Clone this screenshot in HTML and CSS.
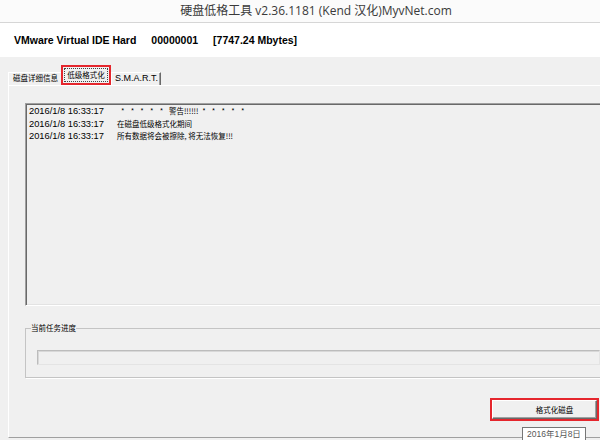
FILE: index.html
```html
<!DOCTYPE html>
<html lang="zh-CN">
<head>
<meta charset="utf-8">
<title>硬盘低格工具</title>
<link rel="stylesheet" href="styles.css">
</head>
<body>
<div class="window">
  <div class="titlebar">硬盘低格工具 v2.36.1181 (Kend 汉化)MyvNet.com</div>
  <div class="header">
    <span>VMware Virtual IDE Hard</span>
    <span>00000001</span>
    <span>[7747.24 Mbytes]</span>
  </div>
  <div class="main">
    <div class="tabs">
      <div class="tab first">磁盘详细信息</div>
      <div class="tab active"><span class="focus">低级格式化</span></div>
      <div class="tab last">S.M.A.R.T.</div>
    </div>
    <div class="panel">
      <div class="log">
        <div class="row"><span class="time">2016/1/8 16:33:17</span><span class="msg"><span class="stars lead">* * * * *</span> <span class="warn">警告!!!!!!</span> <span class="stars">* * * * *</span></span></div>
        <div class="row"><span class="time">2016/1/8 16:33:17</span><span class="msg">在磁盘低级格式化期间</span></div>
        <div class="row"><span class="time">2016/1/8 16:33:17</span><span class="msg">所有数据将会被擦除, 将无法恢复!!!</span></div>
      </div>
      <fieldset class="group">
        <legend>当前任务进度</legend>
        <div class="progress"></div>
      </fieldset>
      <div class="actions">
        <div class="mark"><button class="btn">格式化磁盘</button></div>
      </div>
    </div>
  </div>
</div>
<div class="tooltip">2016年1月8日</div>
</body>
</html>
```
FILE: styles.css
```css
html, body {
  margin: 0;
  padding: 0;
  overflow: hidden;
}
body {
  width: 600px;
  height: 440px;
  background: #f0f0f0;
  font-family: "Liberation Sans", Arial, sans-serif;
  color: #000;
}
.window {
  width: 632px;
}
.titlebar {
  height: 22px;
  line-height: 22px;
  background: #fbfbfb;
  border-bottom: 1px solid #d6d6d6;
  text-align: center;
  font-family: "Open Sans", "Noto Sans CJK SC", sans-serif;
  font-size: 12px;
  color: #3a3a3a;
}
.header {
  height: 34px;
  background: #fff;
  display: flex;
  align-items: center;
  gap: 15px;
  padding-left: 14px;
  font-weight: bold;
  font-size: 10.5px;
  font-family: "Liberation Sans", Arial, sans-serif;
}
.main {
  padding-left: 8px;
}
.tabs {
  height: 28px;
  display: flex;
  align-items: flex-end;
  font-family: "Noto Sans CJK SC", sans-serif;
  font-size: 7.5px;
}
.tab {
  box-sizing: border-box;
  height: 13px;
  line-height: 10px;
  border-top: 1px solid #fff;
  border-left: 1px solid #fff;
  padding: 0 0 0 4px;
  white-space: nowrap;
}
.tab.first {
  width: 53px;
}
.tab.active {
  width: 50px;
  height: 20px;
  border: 2px solid #e5262d;
  display: flex;
  align-items: center;
  justify-content: center;
  padding: 0;
}
.tab.active .focus {
  border: 1px dotted #444;
  padding: 1px 2px;
  line-height: 10px;
}
.tab.last {
  width: 50px;
  border-right: 1px solid #696969;
  box-shadow: inset -1px 0 0 #a0a0a0;
  font-family: "Liberation Sans", Arial, sans-serif;
  font-size: 9px;
  line-height: 11px;
  padding-left: 3px;
}
.panel {
  box-sizing: border-box;
  height: 353px;
  border-top: 1px solid #fff;
  border-left: 1px solid #fff;
  border-bottom: 1px solid #a0a0a0;
  padding: 17px 20px 0 16px;
}
.log {
  box-sizing: border-box;
  height: 203px;
  border: 1px solid;
  border-color: #a0a0a0 #fff #fff #a0a0a0;
  box-shadow: inset 1px 1px 0 #696969, inset -1px -1px 0 #e3e3e3;
  padding: 1px 3px 0 3px;
}
.row {
  display: flex;
  height: 12.5px;
  line-height: 12.5px;
  white-space: nowrap;
}
.time {
  width: 88px;
  flex: none;
  font-family: "Liberation Sans", Arial, sans-serif;
  font-size: 9.3px;
}
.msg {
  font-family: "Noto Sans CJK SC", sans-serif;
  font-size: 7.5px;
}
.stars {
  word-spacing: 4.5px;
}
.stars.lead {
  padding-left: 4px;
}
.warn {
  margin: 0 2px 0 4px;
}
.group {
  margin: 17px 0 0 0;
  padding: 17px 11px 12px 11px;
  border: 1px solid #c4c4c4;
  box-shadow: 1px 1px 0 #fff;
}
.group legend {
  font-family: "Noto Sans CJK SC", sans-serif;
  font-size: 7.5px;
  line-height: 10px;
  padding: 0;
  margin-left: -6px;
}
.progress {
  height: 15px;
  box-sizing: border-box;
  border: 1px solid;
  border-color: #bcbcbc #e4e4e4 #e4e4e4 #bcbcbc;
  box-shadow: inset 1px 1px 0 #d8d8d8;
}
.actions {
  display: flex;
  justify-content: flex-end;
  margin-top: 20px;
  margin-right: 13px;
}
.mark {
  border: 2px solid #e5262d;
  width: 109px;
  height: 23px;
  box-sizing: border-box;
}
.btn {
  display: block;
  width: 105px;
  height: 19px;
  margin: 0;
  padding: 0 0 0 20px;
  background: #f0f0f0;
  border: 1px solid;
  border-color: #fff #696969 #696969 #fff;
  box-shadow: inset -1px -1px 0 #a0a0a0;
  font-family: "Noto Sans CJK SC", sans-serif;
  font-size: 7.5px;
  color: #000;
}
.tooltip {
  position: absolute;
  left: 522px;
  top: 427px;
  height: 16px;
  box-sizing: border-box;
  padding: 0 4px;
  border: 1px solid #767676;
  background: #fff;
  font-family: "Liberation Sans", "Noto Sans CJK SC", sans-serif;
  font-size: 8.5px;
  line-height: 13px;
  color: #575757;
}
```
